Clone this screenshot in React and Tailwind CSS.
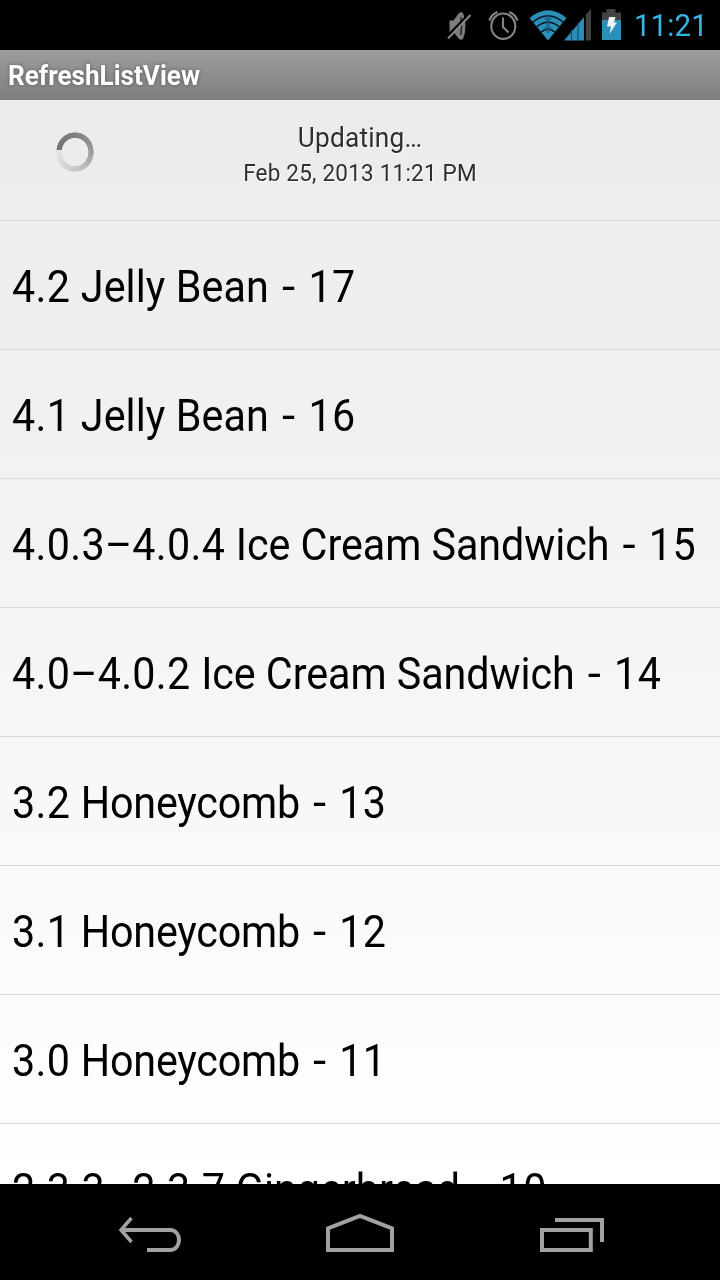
const ROWS = [
  ['4.2', 'Jelly Bean', '17'],
  ['4.1', 'Jelly Bean', '16'],
  ['4.0.3–4.0.4', 'Ice Cream Sandwich', '15'],
  ['4.0–4.0.2', 'Ice Cream Sandwich', '14'],
  ['3.2', 'Honeycomb', '13'],
  ['3.1', 'Honeycomb', '12'],
  ['3.0', 'Honeycomb', '11'],
  ['2.3.3–2.3.7', 'Gingerbread', '10'],
];

const NAME_TRACKING = {
  'Jelly Bean': 'tracking-[0.1px]',
  'Ice Cream Sandwich': 'tracking-[-0.05px]',
  Honeycomb: 'tracking-[-0.22px]',
  Gingerbread: 'tracking-normal',
};

function StatusBar() {
  return (
    <header className="flex h-[50px] shrink-0 items-center justify-end bg-black">
      <svg className="h-[50px] w-[40px]" viewBox="440 0 40 50" fill="none">
        <path d="M449.500 20.500h4L459 13q2.500-1.500 4 0 2.500 6 2.500 13t-2.500 13q-2 1.500-4 0L453.500 32h-4z" fill="#7d7d7d" />
        <path d="M460.800 17q1.600 9 0 18" stroke="#222" strokeWidth="1.500" />
        <path d="M446 37.500 469.500 13.500" stroke="#000" strokeWidth="2.500" />
        <path d="M448 38.500 470.500 15" stroke="#858585" strokeWidth="2" />
      </svg>
      <svg className="h-[50px] w-[44px]" viewBox="480 0 44 50" fill="none" stroke="#858585">
        <ellipse cx="503.300" cy="26.200" rx="12" ry="12.700" strokeWidth="2.100" />
        <path d="M503 17.500V27l5.500 5.500" strokeWidth="2.100" />
        <path d="M489.300 20.500Q491.500 14.500 497.500 12M509.300 12Q515.300 14.500 517.500 20.500" strokeWidth="2.200" />
      </svg>
      <svg className="h-[50px] w-[40px]" viewBox="524 0 40 50" overflow="visible">
        <path d="M529.500 18Q548 2.500 566.500 18L548 40.500z" fill="#2b8fb9" />
        <g fill="none" stroke="#071820" strokeWidth="1.500">
          <path d="M532.500 22.500Q548 9 563.500 22.500" />
          <path d="M536 27.500Q548 17 560 27.500" />
          <path d="M540.500 32.500Q548 26 555.500 32.500" />
        </g>
        <path d="M548 14l4 6h-2.500v7h2.500l-4 7-4-7h2.500v-7H544z" fill="#145875" opacity=".7" />
      </svg>
      <svg className="h-[50px] w-[32px]" viewBox="564 0 32 50">
        <path d="M564 40.500 584 17v23.500z" fill="#2b8fb9" />
        <path d="M585.500 15 591 9v31.500h-5.500z" fill="#424242" />
        <path d="M571.500 30v11M578 23v18" stroke="#145270" strokeWidth="1.200" />
        <path d="M584.700 16v25" stroke="#000" strokeWidth="1.500" />
      </svg>
      <svg className="h-[50px] w-[36px]" viewBox="596 0 36 50">
        <path d="M602 12.500h4.500V9h9v3.500h5.500V20h-19z" fill="#424242" />
        <path d="M602 20h19v20h-19z" fill="#2b8fb9" />
        <path d="M609 17h6.500l-1.500 5.500h3L609.500 34l1.500-7.500h-4z" fill="#eaf3f6" />
      </svg>
      <div className="h-[50px] w-[88px] pl-[2px]">
        <div className="origin-left scale-x-[0.92] text-[32px] leading-[51px] tracking-[0.1px] whitespace-nowrap text-[#33b5e5]">11:21</div>
      </div>
    </header>
  );
}

function Spinner() {
  return (
    <div className="flex h-[40px] w-[38px] items-center justify-center rounded-[50%] bg-[conic-gradient(from_277deg,#747474,#828282_25%,#979797_45%,#c6c6c6_70%,#e6e6e6_100%)] [mask-image:radial-gradient(closest-side,transparent_69%,black_72%,black_97%,transparent_100%)]" />
  );
}

function NavBar() {
  return (
    <nav className="flex h-[96px] shrink-0 items-center justify-between bg-black px-[110px]">
      <svg className="h-[96px] w-[80px]" viewBox="110 1184 80 96" fill="none" stroke="#a2a2a2" strokeWidth="4">
        <path d="M121 1230h49c12 0 12 20 0 20h-23" />
        <path d="M131.500 1218 121 1230l10.500 12" strokeWidth="3.500" />
      </svg>
      <svg className="h-[96px] w-[80px]" viewBox="320 1184 80 96" fill="none" stroke="#a2a2a2">
        <path d="M328 1250v-21.700l32-12.300 32 12.300V1250z" strokeWidth="4" />
      </svg>
      <svg className="h-[96px] w-[80px]" viewBox="530 1184 80 96" fill="none" stroke="#a2a2a2" strokeWidth="4">
        <path d="M542 1230h48.800v20H542zM555 1220h47v22" />
      </svg>
    </nav>
  );
}

function Row({ version, name, api }) {
  return (
    <li className="h-[129px] border-b border-[#d9d9d9] pl-[12px]">
      <div className="origin-left scale-x-[0.9375] text-[44px] leading-[133px] whitespace-nowrap text-black">
        <span className="tracking-[0.35px]">{version} </span>
        <span className={NAME_TRACKING[name]}>{name} </span>
        <span className="mr-[3.5px] ml-[4px] inline-block scale-x-[1.15]">-</span>
        <span className="tracking-[0.5px]"> {api}</span>
      </div>
    </li>
  );
}

export default function App() {
  return (
    <div className="flex h-[1280px] w-[720px] flex-col overflow-hidden bg-black font-['Roboto',sans-serif]">
      <StatusBar />
      <div className="h-[50px] shrink-0 border-b border-[#7b7b7b] bg-linear-to-b from-[#9d9d9d] to-[#7f7f7f] pl-[8px]">
        <h1 className="origin-left scale-x-[0.932] text-[28px] leading-[52px] font-bold whitespace-nowrap text-white [text-shadow:0_0_4px_#555]">RefreshListView</h1>
      </div>
      <main className="min-h-0 flex-1 overflow-hidden bg-linear-to-b from-[#ebebeb] to-white">
        <section className="grid h-[121px] grid-cols-[150px_1fr_150px] border-b border-[#d8d8d8] text-center text-[#2f2f2f] [text-shadow:1px_1px_0_#fff]">
          <div className="flex justify-center pt-[32px]"><Spinner /></div>
          <div className="pt-[20px]">
            <div className="scale-x-[0.9375] text-[28px] leading-[35px] tracking-[0.2px] whitespace-nowrap">Updating…</div>
            <div className="scale-x-[0.9375] text-[24px] leading-[37px] tracking-[0.22px] whitespace-nowrap">Feb 25, 2013 11:21 PM</div>
          </div>
        </section>
        <ul>
          {ROWS.map(([version, name, api]) => (
            <Row key={version} version={version} name={name} api={api} />
          ))}
        </ul>
      </main>
      <NavBar />
    </div>
  );
}
